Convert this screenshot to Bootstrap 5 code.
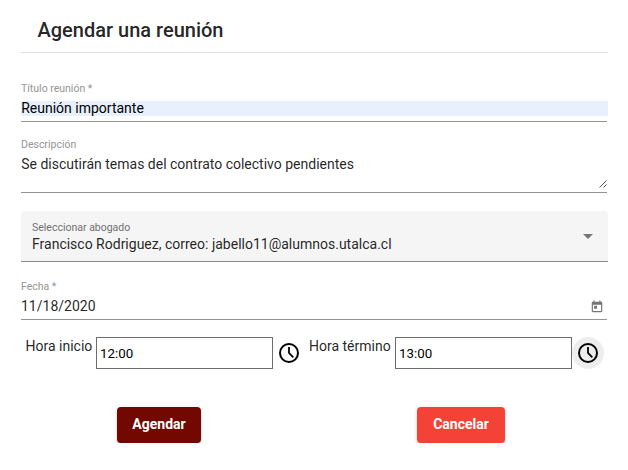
<!DOCTYPE html>
<html lang="es">
<head>
<meta charset="utf-8">
<meta name="viewport" content="width=device-width, initial-scale=1">
<title>Agendar una reunión</title>
<link href="https://cdn.jsdelivr.net/npm/bootstrap@5.3.0/dist/css/bootstrap.min.css" rel="stylesheet">
<style>
  body { font-family: Roboto, sans-serif; font-size: 14px; line-height: 16px; color: rgba(0,0,0,.87); background: #fff; overflow: hidden; }
  .meeting { width: 587px; margin-left: 21px; }
  .meeting-head { height: 53px; padding: 18px 0 0 16.5px; border-bottom: 1px solid #e0e0e0; }
  .meeting-head h1 { font-size: 20px; line-height: 24px; font-weight: 500; }
  .field { width: 586px; border-bottom: 1px solid #949494; }
  .field-label { display: block; font-size: 10.5px; line-height: 12px; color: #949494; }
  .field .form-control { font-size: 14px; line-height: 15px; color: inherit; }
  .field-title { height: 51px; margin-top: 18px; padding: 12px 0 5px; }
  .field-title .form-control { width: 587px; height: 15px; margin-top: 6px; background: #e8f0fe; color: #000; text-indent: .2px; }
  .field-desc { height: 54px; margin-top: 17px; }
  .field-desc textarea.form-control { height: 32px; min-height: 0; margin-top: 5px; line-height: 16px; overflow: hidden; resize: none; text-indent: .2px; }
  .grip { position: absolute; right: 0; bottom: 4px; }
  .picker { height: 51px; margin-top: 18px; padding: 11px 14px 0 11px; background: #f5f5f5; border-bottom: 1px solid #8b8b8b; border-radius: 4px 4px 0 0; }
  .picker .field-label { color: #707070; }
  .picked { margin-top: 2px; }
  .caret { width: 0; border: 5px solid transparent; border-top-color: #757575; border-bottom: 0; margin: 12px 1px 0 0; }
  .field-date { height: 39px; margin-top: 19px; }
  .date-line { margin-top: 6px; }
  .date-line svg { margin-right: 3px; }
  .times { margin-top: 17px; height: 32px; padding-left: 4.5px; }
  .times label { width: 70.5px; padding-top: 1px; white-space: nowrap; flex-shrink: 0; }
  .times .label-end { width: 90px; }
  .time-box { width: 177px; height: 32px; flex-shrink: 0; padding: 1px 3px; border: 1px solid #6d6d6d; font-size: 13.333px; color: #000; background: #fff; }
  .clock { width: 32px; height: 32px; flex-shrink: 0; border: 0; padding: 4px; background: transparent; border-radius: 50%; color: #000; }
  .clock.hovered { background: #ededed; }
  .actions { margin-top: 38px; padding-left: 96px; gap: 216px; }
  .action { --bs-btn-color: #fff; --bs-btn-hover-color: #fff; height: 36px; padding: 0 0 2px; font-size: 14px; font-weight: 700; line-height: 34px; border: 0; border-radius: 4px; color: #fff; box-shadow: 0 3px 1px -2px rgba(0,0,0,.2), 0 2px 2px rgba(0,0,0,.14), 0 1px 5px rgba(0,0,0,.12); }
  .action-save { width: 84px; background: #730800; }
  .action-cancel { width: 88px; background: #f44336; }
</style>
</head>
<body>
<main class="meeting">
  <header class="meeting-head"><h1 class="m-0">Agendar una reunión</h1></header>
  <form>
    <div class="field field-title">
      <label class="field-label" for="titulo">Título reunión *</label>
      <input id="titulo" class="form-control border-0 rounded-0 p-0" value="Reunión importante">
    </div>
    <div class="field field-desc position-relative">
      <label class="field-label" for="desc">Descripción</label>
      <textarea id="desc" class="form-control border-0 rounded-0 p-0 bg-transparent">Se discutirán temas del contrato colectivo pendientes</textarea>
      <svg class="grip" width="8" height="8" viewBox="0 0 8 8" stroke="#555" stroke-width="1"><path d="M.5 7.5l7-7M4.5 7.5l3-3"/></svg>
    </div>
    <div class="picker d-flex justify-content-between" role="combobox" aria-label="Seleccionar abogado">
      <div>
        <span class="field-label">Seleccionar abogado</span>
        <span class="d-block picked">Francisco Rodriguez, correo: jabello11@alumnos.utalca.cl</span>
      </div>
      <span class="caret align-self-start"></span>
    </div>
    <div class="field field-date">
      <label class="field-label" for="fecha">Fecha *</label>
      <div class="d-flex align-items-center date-line">
        <input id="fecha" class="form-control border-0 rounded-0 p-0 bg-transparent" value="11/18/2020">
        <svg class="flex-shrink-0" width="14" height="14" viewBox="0 0 24 24" fill="#757575"><path d="M19 3h-1V1h-2v2H8V1H6v2H5c-1.11 0-1.99.9-1.99 2L3 19c0 1.1.89 2 2 2h14c1.1 0 2-.9 2-2V5c0-1.1-.9-2-2-2zm0 16H5V8h14v11zM7 10h5v5H7z"/></svg>
      </div>
    </div>
    <div class="times d-flex">
      <label for="inicio">Hora inicio</label>
      <input id="inicio" class="time-box rounded-0" value="12:00">
      <button type="button" class="clock d-flex" aria-label="Elegir hora de inicio"><svg width="24" height="24" viewBox="0 0 24 24" fill="none" stroke="currentColor"><circle cx="12" cy="12" r="9" stroke-width="2"/><path d="M12 6v6l4.3 4.3" stroke-width="1.8"/></svg></button>
      <label class="label-end ps-1" for="termino">Hora término</label>
      <input id="termino" class="time-box rounded-0" value="13:00">
      <button type="button" class="clock hovered d-flex" aria-label="Elegir hora de término"><svg width="24" height="24" viewBox="0 0 24 24" fill="none" stroke="currentColor"><circle cx="12" cy="12" r="9" stroke-width="2"/><path d="M12 6v6l4.3 4.3" stroke-width="1.8"/></svg></button>
    </div>
    <div class="actions d-flex">
      <button type="button" class="btn action action-save">Agendar</button>
      <button type="button" class="btn action action-cancel">Cancelar</button>
    </div>
  </form>
</main>
<script src="https://cdn.jsdelivr.net/npm/bootstrap@5.3.0/dist/js/bootstrap.bundle.min.js"></script>
</body>
</html>
